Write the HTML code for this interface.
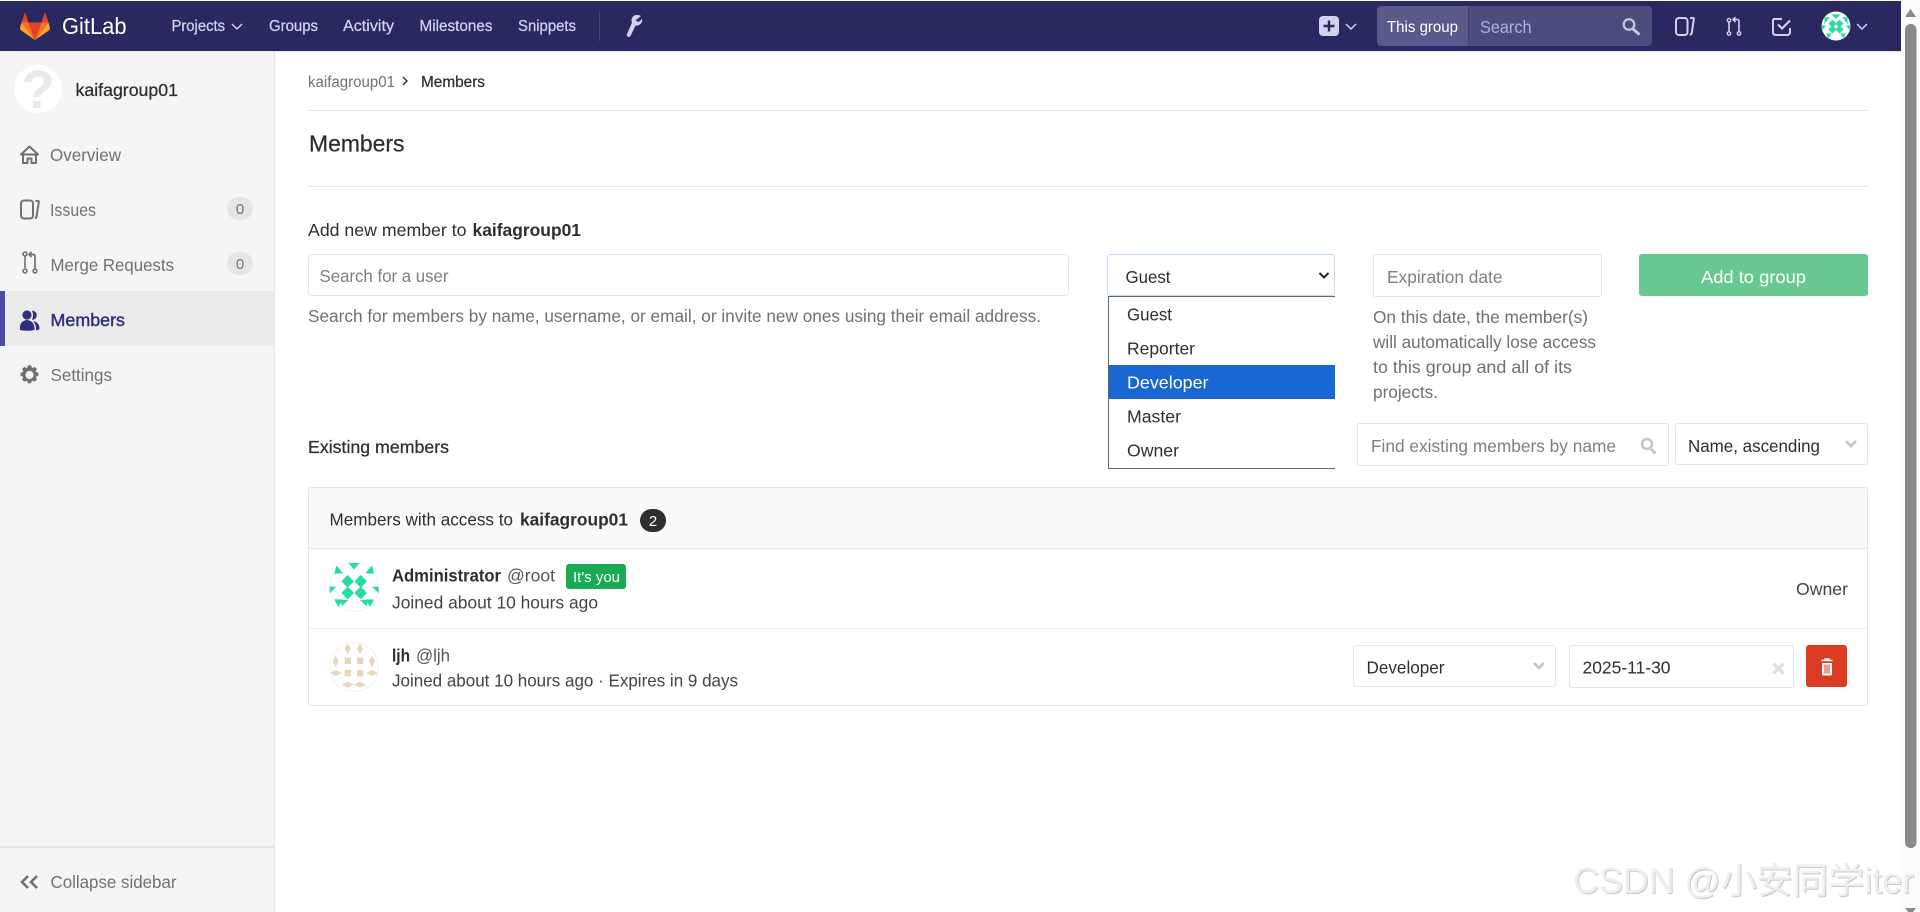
<!DOCTYPE html>
<html lang="en"><head><meta charset="utf-8"><title>Members · kaifagroup01 · GitLab</title>
<style>
html,body{margin:0;padding:0;background:#fff;overflow:hidden;width:1920px;height:912px}
svg{display:block}
text{font-family:"Liberation Sans","Noto Sans CJK SC",sans-serif;font-size:17.5px;fill:#2e2e2e}
.m{stroke:currentColor;stroke-width:.25}
.nav{font-size:15.5px;fill:#d1d1f0;color:#d1d1f0}
.side{fill:#707070}
.g{fill:#707070}
.ph{fill:#7f7f7f}
.box{fill:#fff;stroke:#e5e5e5;stroke-width:1}
</style></head><body>
<svg xmlns="http://www.w3.org/2000/svg" width="1920" height="912" viewBox="0 0 1920 912">
<rect width="1920" height="912" fill="#fff"/>

<!-- sidebar -->
<rect x="0" y="51" width="274" height="861" fill="#f5f5f5"/>
<rect x="274" y="51" width="1" height="861" fill="#e5e5e5"/>
<rect x="0" y="291" width="274" height="55" fill="#ebebeb"/>
<rect x="0" y="291" width="5" height="55" fill="#4b4ba3"/>
<rect x="0" y="846" width="274" height="2" fill="#e5e5e5"/>
<ellipse cx="38" cy="89" rx="24" ry="24" fill="#fff"/>
<text x="38" y="108" text-anchor="middle" style="font-size:54px;font-weight:bold;fill:#e9e9e9">?</text>
<text x="75.5" y="96" class="m" textLength="102.5" lengthAdjust="spacingAndGlyphs" style="color:#2e2e2e">kaifagroup01</text>

<g fill="none" stroke="#707070" stroke-width="2" stroke-linejoin="round">
<!-- home -->
<path d="M21 154.500 L29.500 146.500 L38 154.500 Z"/><path d="M23 155 V163 H27.500 V158.500 H31.500 V163 H36 V155"/>
<!-- issues -->
<rect x="21" y="200.500" width="12" height="18" rx="3"/><path d="M35.500 201 h2.600 q.9 0 .7 1 l-2.300 15 q-.2 1 -1.500 1"/>
<!-- mr -->
<path d="M25 256 V268" stroke-width="1.600"/><circle cx="25" cy="254" r="1.900" stroke-width="1.600"/><circle cx="25" cy="271" r="1.900" stroke-width="1.600"/><circle cx="35" cy="271" r="1.900" stroke-width="1.600"/>
<path d="M35 268.500 V256.500 q0 -2 -2 -2 H29.500 M31.500 252 L29 254.500 L31.500 257" stroke-width="1.700"/>
</g>
<!-- members -->
<g fill="#2f2f7d"><circle cx="27" cy="315" r="4.600"/><path d="M20 330 q-1 -9 7 -10 q8 1 7.500 10 q-7 1.500 -14.500 0z"/><path d="M32 310.500 a4.500 4.500 0 0 1 0 9.500 q2 -4.500 0 -9.500z"/><path d="M33 321 q6 1 6.500 7.500 q0 1.500 -3.500 1.800 q.5 -5.500 -3 -9.300z"/></g>
<!-- gear -->
<g transform="translate(29.500 375) scale(.74) translate(-29.500 -374.500)"><path fill="#707070" fill-rule="evenodd" d="M27.300 361.500h4.400l.6 2.700 1.800.8 2.400-1.500 3.100 3.100-1.500 2.400.8 1.800 2.700.6v4.400l-2.700.6-.8 1.800 1.500 2.400-3.100 3.100-2.400-1.500-1.800.8-.6 2.700h-4.400l-.6-2.700-1.800-.8-2.400 1.500-3.100-3.100 1.500-2.400-.8-1.800-2.700-.6v-4.400l2.700-.6.8-1.800-1.500-2.400 3.100-3.100 2.400 1.500 1.800-.8z M29.500 369a5.500 5.500 0 1 0 0 11 5.500 5.500 0 0 0 0-11z"/></g>
<path d="M28 876 L22 882 L28 888 M37 876 L31 882 L37 888" fill="none" stroke="#707070" stroke-width="2.600"/>

<text x="50" y="161" class="side" textLength="71" lengthAdjust="spacingAndGlyphs">Overview</text>
<text x="50" y="216" class="side" textLength="46" lengthAdjust="spacingAndGlyphs">Issues</text>
<text x="50.500" y="271" class="side" textLength="123.500" lengthAdjust="spacingAndGlyphs">Merge Requests</text>
<text x="50.500" y="326" class="m" textLength="74.500" lengthAdjust="spacingAndGlyphs" style="fill:#2f2f7d;color:#2f2f7d;stroke-width:.45">Members</text>
<text x="50.500" y="381" class="side" textLength="61.500" lengthAdjust="spacingAndGlyphs">Settings</text>
<text x="50.500" y="888" class="side" textLength="126" lengthAdjust="spacingAndGlyphs">Collapse sidebar</text>
<rect x="227" y="197" width="26" height="23" rx="11.500" fill="#e5e5e5"/>
<rect x="227" y="252" width="26" height="23" rx="11.500" fill="#e5e5e5"/>
<text x="240" y="214" text-anchor="middle" style="font-size:15px;fill:#707070">0</text>
<text x="240" y="269" text-anchor="middle" style="font-size:15px;fill:#707070">0</text>

<!-- header -->
<rect x="0" y="1" width="1901" height="50" fill="#292961"/>
<rect x="0" y="51" width="1901" height="1" fill="#e5e5e5"/>
<g transform="translate(20 12)">
<polygon points="8.500,10.500 21.500,10.500 15,28" fill="#e24329"/>
<polygon points="1.500,10.500 8.500,10.500 15,28" fill="#fc6d26"/>
<polygon points="28.500,10.500 21.500,10.500 15,28" fill="#fc6d26"/>
<polygon points="1.500,10.500 0,16 .5,18 15,28" fill="#fca326"/>
<polygon points="28.500,10.500 30,16 29.500,18 15,28" fill="#fca326"/>
<polygon points="1.500,10.500 8.500,10.500 5,0" fill="#e24329"/>
<polygon points="28.500,10.500 21.500,10.500 25,0" fill="#e24329"/>
</g>
<text x="62" y="34" textLength="64.500" lengthAdjust="spacingAndGlyphs" style="font-size:23px;fill:#fff">GitLab</text>
<text x="171.500" y="31" class="nav m" textLength="53.500" lengthAdjust="spacingAndGlyphs">Projects</text>
<path d="M232 24 L237 29 L242 24" fill="none" stroke="#d1d1f0" stroke-width="1.500"/>
<text x="269" y="31" class="nav m" textLength="49" lengthAdjust="spacingAndGlyphs">Groups</text>
<text x="343" y="31" class="nav m" textLength="51" lengthAdjust="spacingAndGlyphs">Activity</text>
<text x="419.500" y="31" class="nav m" textLength="73" lengthAdjust="spacingAndGlyphs">Milestones</text>
<text x="518" y="31" class="nav m" textLength="58" lengthAdjust="spacingAndGlyphs">Snippets</text>
<rect x="599" y="11" width="1" height="30" fill="#45457a"/>
<path d="M641 16 q-5 -2.500 -8 .5 q-2.500 2.500 -1 6 L627 34 q-.8 2 1 2.800 q1.800 .8 2.800 -1.300 L635.500 25.500 q3.500 .5 5.500 -2 q1.700 -2.500 1 -4.500 L638.500 22 L635.500 20.500z" fill="#d1d1f0"/>

<rect x="1319" y="16" width="20" height="20" rx="4" fill="#d1d1f0"/>
<path d="M1329 20.500 V31.500 M1323.500 26 H1334.500" stroke="#292961" stroke-width="2.400"/>
<path d="M1346 24 L1351 29 L1356 24" fill="none" stroke="#d1d1f0" stroke-width="1.500"/>
<path d="M1381 6 H1468 V46 H1381 a4 4 0 0 1 -4 -4 V10 a4 4 0 0 1 4 -4z" fill="#5a5a8a"/>
<path d="M1468 6 H1648 a4 4 0 0 1 4 4 V42 a4 4 0 0 1 -4 4 H1468z" fill="#4c4c7d"/>
<rect x="1468" y="6" width="1" height="40" fill="#3d3d78"/>
<text x="1387" y="32" textLength="71" lengthAdjust="spacingAndGlyphs" style="font-size:16px;fill:#fff">This group</text>
<text x="1480" y="33" textLength="51.500" lengthAdjust="spacingAndGlyphs" style="fill:#b0b0da">Search</text>
<circle cx="1629" cy="24.500" r="5.300" fill="none" stroke="#c8c8e2" stroke-width="2.200"/><path d="M1633 29 L1639.500 34.500" stroke="#c8c8e2" stroke-width="3"/>
<g fill="none" stroke="#d1d1f0" stroke-width="2" stroke-linejoin="round">
<rect x="1676" y="18" width="11.500" height="17" rx="3"/><path d="M1690 18 h3 q1 0 .8 1 l-2 14 q-.2 1.500 -2 1.500"/>
<path d="M1729 22 V32" stroke-width="1.600"/><circle cx="1729" cy="20.300" r="1.700" stroke-width="1.400"/><circle cx="1729" cy="33.500" r="1.700" stroke-width="1.400"/><circle cx="1739" cy="33.500" r="1.700" stroke-width="1.400"/>
<path d="M1739 31.500 V21.500 q0 -2 -2 -2 H1733.500 M1735.500 17.200 L1733 19.500 L1735.500 22" stroke-width="1.600"/>
<path d="M1773 19 V32 q0 3 3 3 H1787 q3 0 3 -3 V28 M1773 19 H1782" /><path d="M1778 24.500 L1782 28.500 L1790 20.500" stroke-width="2.200"/>
</g>
<circle cx="1836" cy="26" r="14.500" fill="#fff"/>
<g fill="#26dd9e" transform="translate(1821.500 11.500) scale(.58)">
<polygon points="17,5 33,5 25,13"/><polygon points="5,10 14,10 5,22"/><polygon points="45,10 36,10 45,22"/><polygon points="19,14 26,21 19,28 12,21"/><polygon points="31,14 38,21 31,28 24,21"/><polygon points="19,24 26,31 19,38 12,31"/><polygon points="31,24 38,31 31,38 24,31"/><polygon points="0,24 8,24 2,32"/><polygon points="50,24 42,24 48,32"/><polygon points="8,38 18,38 12,46"/><polygon points="42,38 32,38 38,46"/>
</g>
<path d="M1857 24 L1862 29 L1867 24" fill="none" stroke="#d1d1f0" stroke-width="1.500"/>

<!-- breadcrumb -->
<text x="308" y="87" textLength="87" lengthAdjust="spacingAndGlyphs" style="font-size:15.500px;fill:#707070">kaifagroup01</text>
<path d="M403 77 L407 81 L403 85" fill="none" stroke="#2e2e2e" stroke-width="1.400"/>
<text x="421" y="87" class="m" textLength="64" lengthAdjust="spacingAndGlyphs" style="font-size:15.500px;color:#2e2e2e">Members</text>
<rect x="308" y="110" width="1560" height="1" fill="#e5e5e5"/>
<text x="309" y="151.500" class="m" textLength="95.500" lengthAdjust="spacingAndGlyphs" style="font-size:23.500px;color:#2e2e2e;fill:#2e2e2e">Members</text>
<rect x="308" y="186" width="1560" height="1" fill="#e5e5e5"/>

<text x="308" y="236" textLength="158.500" lengthAdjust="spacingAndGlyphs">Add new member to</text>
<text x="472.500" y="236" textLength="108.500" lengthAdjust="spacingAndGlyphs" style="font-weight:bold">kaifagroup01</text>

<rect x="308.500" y="254.500" width="760" height="41" rx="3" fill="#fff" stroke="#dfe9f2"/>
<text x="319.500" y="282" class="ph" textLength="129" lengthAdjust="spacingAndGlyphs">Search for a user</text>
<text x="308" y="322" class="g" textLength="733" lengthAdjust="spacingAndGlyphs">Search for members by name, username, or email, or invite new ones using their email address.</text>

<!-- role select with opened list -->
<rect x="1107.500" y="254.500" width="227" height="41" rx="3" fill="#fff" stroke="#bfdcf5"/>
<text x="1125.500" y="283" textLength="45" lengthAdjust="spacingAndGlyphs">Guest</text>
<path d="M1319.500 273 L1324 277.500 L1328.500 273" fill="none" stroke="#222" stroke-width="2"/>
<rect x="1108" y="296" width="227" height="173" fill="#fff"/>
<path d="M1335 296.500 H1108.500 V468.500 H1335" fill="none" stroke="#666" stroke-width="1"/>
<rect x="1109" y="365" width="226" height="34" fill="#1967d2"/>
<text x="1127" y="320.500" textLength="45" lengthAdjust="spacingAndGlyphs">Guest</text>
<text x="1127" y="354.500" textLength="68" lengthAdjust="spacingAndGlyphs">Reporter</text>
<text x="1127" y="388.500" textLength="81.500" lengthAdjust="spacingAndGlyphs" style="fill:#fff">Developer</text>
<text x="1127" y="422.500" textLength="54" lengthAdjust="spacingAndGlyphs">Master</text>
<text x="1127" y="456.500" textLength="52" lengthAdjust="spacingAndGlyphs">Owner</text>

<rect x="1373.500" y="254.500" width="228" height="42" rx="2" class="box"/>
<text x="1387" y="283" class="ph" textLength="115.500" lengthAdjust="spacingAndGlyphs">Expiration date</text>
<rect x="1639" y="254" width="229" height="42" rx="3" fill="#69c88f"/>
<text x="1701" y="283" textLength="105" lengthAdjust="spacingAndGlyphs" style="fill:#fff">Add to group</text>
<text x="1373" y="323" class="g" textLength="215" lengthAdjust="spacingAndGlyphs">On this date, the member(s)</text>
<text x="1373" y="348" class="g" textLength="223" lengthAdjust="spacingAndGlyphs">will automatically lose access</text>
<text x="1373" y="373" class="g" textLength="199" lengthAdjust="spacingAndGlyphs">to this group and all of its</text>
<text x="1373" y="398" class="g" textLength="65" lengthAdjust="spacingAndGlyphs">projects.</text>

<text x="308" y="453" class="m" textLength="141" lengthAdjust="spacingAndGlyphs" style="color:#2e2e2e">Existing members</text>
<rect x="1357.500" y="423.500" width="311" height="42" rx="2" class="box"/>
<text x="1371" y="452" class="ph" textLength="245" lengthAdjust="spacingAndGlyphs">Find existing members by name</text>
<circle cx="1647" cy="444" r="5" fill="none" stroke="#c4c4c4" stroke-width="2.400"/><path d="M1651 449 L1655.500 453.500" stroke="#c4c4c4" stroke-width="2.800"/>
<rect x="1675.500" y="423.500" width="192" height="41" rx="3" class="box"/>
<text x="1688" y="452" textLength="132" lengthAdjust="spacingAndGlyphs">Name, ascending</text>
<path d="M1846 441 L1851 446 L1856 441" fill="none" stroke="#c4c4c4" stroke-width="2.600"/>

<!-- members card -->
<rect x="308.500" y="487.500" width="1559" height="218" rx="2" fill="#fff" stroke="#e5e5e5"/>
<path d="M309 488 H1867 V548 H309z" fill="#fafafa"/>
<rect x="309" y="548" width="1558" height="1" fill="#e5e5e5"/>
<rect x="309" y="628" width="1558" height="1" fill="#eeeeee"/>
<text x="329.500" y="525.500" textLength="183.500" lengthAdjust="spacingAndGlyphs">Members with access to</text>
<text x="520" y="525.500" textLength="108" lengthAdjust="spacingAndGlyphs" style="font-weight:bold">kaifagroup01</text>
<rect x="640" y="509" width="26" height="23" rx="11.500" fill="#2e2e2e"/>
<text x="653" y="526" text-anchor="middle" style="font-size:15px;fill:#fff">2</text>

<!-- admin avatar -->
<circle cx="354" cy="587" r="24.500" fill="#fff" stroke="#f2f2f2"/>
<g fill="#26dd9e" transform="translate(325 558) scale(.33333)">
<polygon points="70,15 104,15 87,34"/><polygon points="34,22 54,46 28,47"/><polygon points="141,22 121,46 147,47"/>
<polygon points="68,51 87,70 68,89 49,70"/><polygon points="107,51 126,70 107,89 88,70"/><polygon points="68,86 87,105 68,124 49,105"/><polygon points="107,86 126,105 107,124 88,105"/>
<polygon points="14,86 34,86 14,106"/><polygon points="161,86 141,86 161,106"/>
<polygon points="28,124 54,124 40,147"/><polygon points="48,126 70,126 50,145"/><polygon points="147,124 121,124 135,147"/><polygon points="127,126 105,126 125,145"/>
</g>
<text x="392" y="581.500" textLength="109" lengthAdjust="spacingAndGlyphs" style="font-weight:bold">Administrator</text>
<text x="507" y="581.500" textLength="48" lengthAdjust="spacingAndGlyphs" style="fill:#555">@root</text>
<rect x="566" y="564" width="60" height="25" rx="3" fill="#1aaa55"/>
<text x="573" y="582" textLength="47" lengthAdjust="spacingAndGlyphs" style="font-size:15px;fill:#fff">It's you</text>
<text x="392" y="608.500" textLength="206" lengthAdjust="spacingAndGlyphs" style="fill:#444">Joined about 10 hours ago</text>
<text x="1796" y="595" textLength="52" lengthAdjust="spacingAndGlyphs" style="fill:#444">Owner</text>

<!-- ljh avatar -->
<circle cx="354" cy="667" r="24.500" fill="#fff" stroke="#f2f2f2"/>
<g fill="#e5d6bd" transform="translate(325 638) scale(.33333)">
<polygon points="68,16 77,32 68,48 59,32"/><polygon points="105,16 114,32 105,48 96,32"/>
<polygon points="32,52 41,70 32,88 23,70"/><polygon points="141,52 150,70 141,88 132,70"/>
<rect x="59" y="59" width="19" height="19"/><rect x="96" y="59" width="19" height="19"/><rect x="59" y="96" width="19" height="19"/><rect x="96" y="96" width="19" height="19"/>
<polygon points="14,105 32,96 50,105 32,114"/><polygon points="123,105 141,96 159,105 141,114"/>
<polygon points="50,140 68,131 86,140 68,149"/><polygon points="87,140 105,131 123,140 105,149"/>
</g>
<text x="392" y="661.500" textLength="18" lengthAdjust="spacingAndGlyphs" style="font-weight:bold">ljh</text>
<text x="416" y="661.500" textLength="34" lengthAdjust="spacingAndGlyphs" style="fill:#555">@ljh</text>
<text x="392" y="686.500" textLength="346" lengthAdjust="spacingAndGlyphs" style="fill:#444">Joined about 10 hours ago · Expires in 9 days</text>

<rect x="1353.500" y="645.500" width="202" height="41" rx="3" class="box"/>
<text x="1366.500" y="673.500" textLength="78" lengthAdjust="spacingAndGlyphs">Developer</text>
<path d="M1534 663 L1539 668 L1544 663" fill="none" stroke="#c4c4c4" stroke-width="2.600"/>
<rect x="1569.500" y="645.500" width="224" height="42" rx="2" class="box"/>
<text x="1582.500" y="673.500" textLength="88" lengthAdjust="spacingAndGlyphs">2025-11-30</text>
<path d="M1773.500 663.500 L1783.500 673.500 M1783.500 663.500 L1773.500 673.500" stroke="#e0e0e0" stroke-width="3.400"/>
<rect x="1806" y="645" width="41" height="42" rx="3" fill="#db3b21"/>
<path d="M1821.500 660.500 H1832.500 M1825 660.500 V659 H1829 V660.500" fill="none" stroke="#fff" stroke-width="1.600"/>
<path d="M1822 663 H1832 V674.500 a1 1 0 0 1 -1 1 H1823 a1 1 0 0 1 -1 -1z" fill="#fff"/>
<path d="M1825 664.500 V673.500 M1827 664.500 V673.500 M1829 664.500 V673.500" stroke="#db3b21" stroke-width="1"/>

<!-- scrollbar -->
<rect x="1901" y="0" width="19" height="912" fill="#fbfbfb"/>
<path d="M1910.500 9 L1916 17 H1905z" fill="#8a8a8a"/>
<rect x="1905" y="24" width="11.500" height="824" rx="5.700" fill="#8a8a8a"/>
<path d="M1905 908 H1916 L1910.500 915z" fill="#8a8a8a"/>

<!-- watermark -->
<g style="filter:drop-shadow(1px 1px 0 #c8c8c8)">
<text x="1573" y="893" textLength="341" lengthAdjust="spacingAndGlyphs" style="font-size:36px;fill:#efefef">CSDN @小安同学iter</text>
</g>
</svg>
</body></html>
